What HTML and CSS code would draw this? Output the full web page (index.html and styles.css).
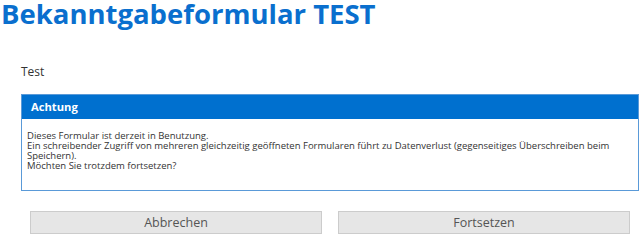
FILE: index.html
```html
<!DOCTYPE html>
<html lang="de">
<head>
<meta charset="utf-8">
<link rel="stylesheet" href="styles.css">
</head>
<body>
<div class="page">
  <h1 class="title">Bekanntgabeformular TEST</h1>
  <div class="content">
    <p class="label">Test</p>
    <div class="alert">
      <div class="alert-head">Achtung</div>
      <div class="alert-body">
        <p class="line">Dieses Formular ist derzeit in Benutzung.</p>
        <p class="line">Ein schreibender Zugriff von mehreren gleichzeitig geöffneten Formularen führt zu Datenverlust (gegenseitiges Überschreiben beim Speichern).</p>
        <p class="line">Möchten Sie trotzdem fortsetzen?</p>
      </div>
    </div>
    <div class="actions">
      <button class="btn">Abbrechen</button>
      <button class="btn">Fortsetzen</button>
    </div>
  </div>
</div>
</body>
</html>
```
FILE: styles.css
```css
html, body {
  margin: 0;
  padding: 0;
  background: #ffffff;
}
body {
  font-family: "Open Sans", "Noto Sans", sans-serif;
  color: #333333;
  width: 640px;
  height: 237px;
  overflow: hidden;
}
.page {
  padding: 0 0 0 1px;
}
.title {
  margin: 0;
  font-size: 27.5px;
  line-height: 27px;
  font-weight: 700;
  color: #0a6fce;
  white-space: nowrap;
}
.content {
  padding: 37px 1px 0 20px;
}
.label {
  margin: 0;
  font-size: 12px;
  line-height: 16px;
  color: #333;
}
.alert {
  margin-top: 14px;
  border: 1px solid #5a9ad8;
  background: #fff;
}
.alert-head {
  background: #0070cf;
  color: #ffffff;
  font-weight: 700;
  font-size: 11.2px;
  line-height: 24px;
  padding: 0 9px;
}
.alert-body {
  font-size: 9.5px;
  line-height: 10px;
  color: #333;
  padding: 12px 5px 19px 5px;
}
.line {
  margin: 0;
}
.actions {
  display: flex;
  gap: 16px;
  padding: 20px 9px 0 9px;
}
.btn {
  flex: 1;
  height: 23px;
  margin: 0;
  border: 1px solid #cccccc;
  background: #e6e6e6;
  color: #555555;
  font-family: "Open Sans", "Noto Sans", sans-serif;
  font-size: 12.5px;
  padding: 0;
}
```
